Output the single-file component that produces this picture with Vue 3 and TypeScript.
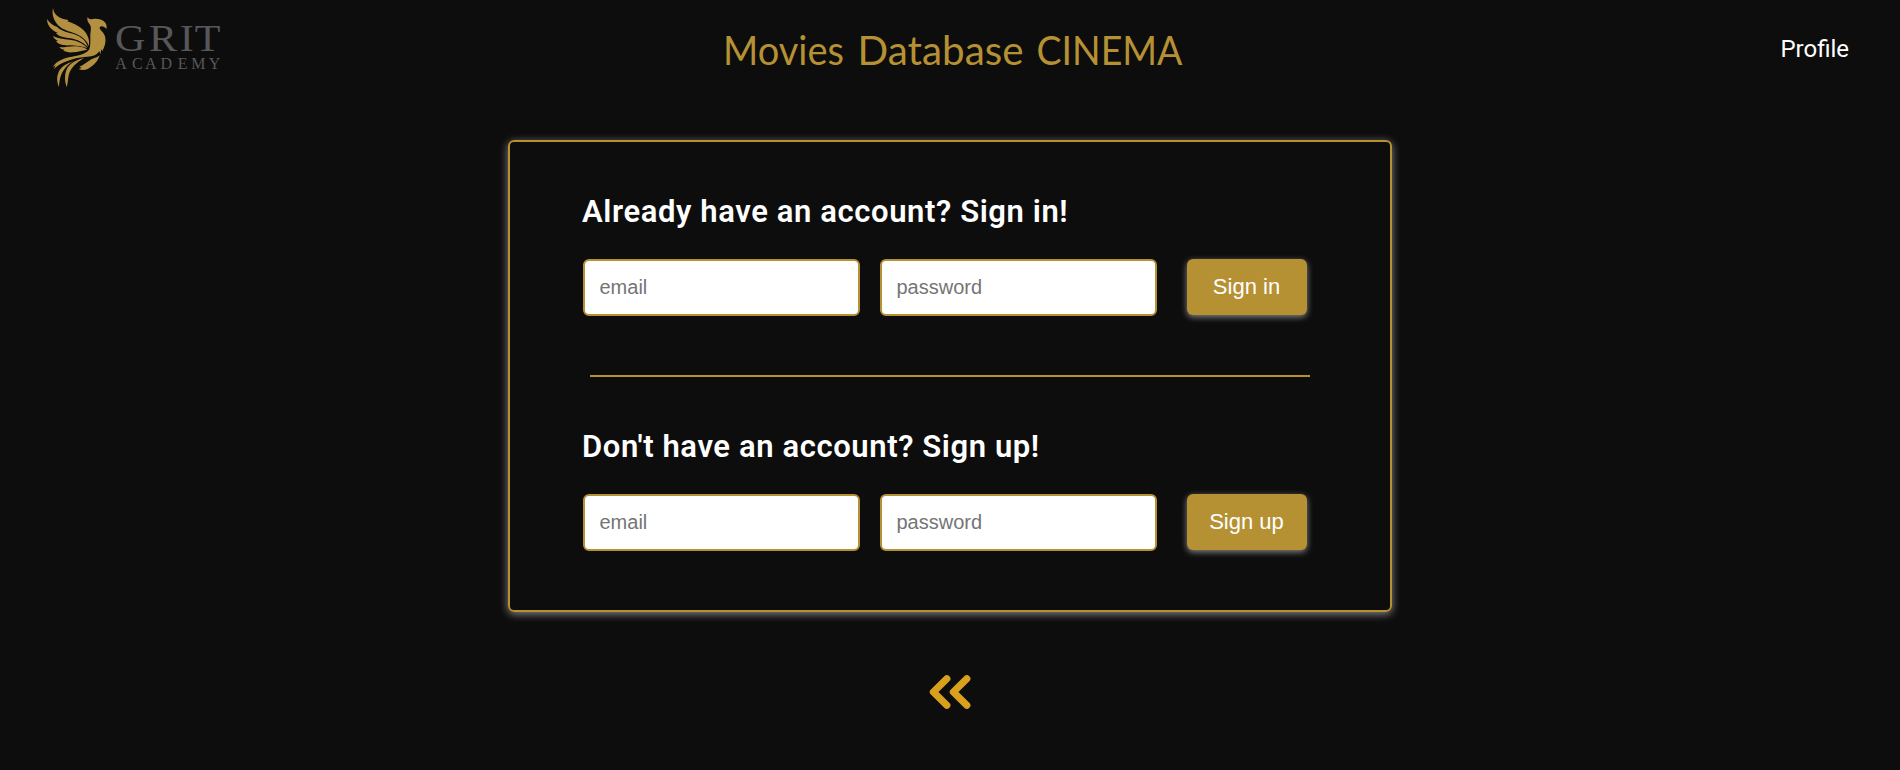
<script setup lang="ts">
interface AuthForm {
  id: string
  title: string
  action: string
}

const forms: AuthForm[] = [
  { id: 'signin', title: 'Already have an account? Sign in!', action: 'Sign in' },
  { id: 'signup', title: "Don't have an account? Sign up!", action: 'Sign up' },
]
</script>

<template>
  <div class="page">
    <header class="header">
      <svg class="logo" viewBox="0 0 200 96" width="200" height="96" role="img" aria-label="Grit Academy">
        <g class="bird" transform="scale(0.33333)">
          <path d="M69 23 C71 42 82 51 103 58 L115 60 L112 64 C128 69 148 78 161 91 C174 105 179 120 177 138 C170 122 160 112 145 105 C125 95 99 91 87 78 C74 65 64 47 69 23 Z" />
          <path d="M51 57 C59 70 69 76 82 81 C92 93 115 97 133 103 C153 110 168 122 174 142 C158 126 142 119 122 115 C104 112 87 111 78 99 L84 99 C66 91 51 78 51 57 Z" />
          <path d="M69 107 C82 116 100 116 119 119 C143 122 162 131 172 145 C154 138 139 137 119 136 C99 137 84 133 78 123 L85 123 C76 119 71 114 69 107 Z" />
          <path d="M88 142 C105 143 122 137 140 139 C153 140 164 143 172 149 C156 151 143 156 130 157 C116 158 106 156 100 151 L104 149 C97 149 92 146 88 142 Z" />
          <path d="M173 51 C176 57 181 59 188 57 C202 54 219 59 226 68 C230 74 231 80 229 87 C223 79 215 77 209 81 C207 89 221 95 225 109 C230 128 222 143 217 154 L214 147 L211 163 L208 153 C199 168 183 169 164 171 C130 174 91 187 71 208 L77 196 L68 201 C79 183 101 174 126 170 C153 166 169 160 178 148 C182 137 181 120 181 107 C181 94 186 83 179 73 C173 66 170 59 173 51 Z" />
          <path d="M163 174 C145 177 123 188 113 202 C105 215 104 231 106 247 L110 262 C116 243 112 228 122 211 C130 197 147 182 163 174 Z" />
          <path d="M130 184 C108 191 91 202 85 218 C79 232 81 248 87 262 C88 242 91 223 103 208 C110 198 119 190 130 184 Z" />
          <path d="M209 166 C205 183 190 198 173 207 C163 211 153 210 146 207 L155 204 L148 200 C161 196 172 185 184 178 C194 174 203 172 209 166 Z" />
        </g>
        <g class="wordmark">
          <text class="grit" transform="scale(1.12 1)" x="75.8 106.3 133.7 147.2" y="51">GRIT</text>
          <text class="academy" x="85.3 102 115 130.5 147.8 161.3 178.8" y="69">ACADEMY</text>
        </g>
      </svg>
      <h1 class="brand">
        <svg viewBox="0 0 470 96" width="470" height="96">
          <text y="65">
            <tspan x="0" textLength="121" lengthAdjust="spacingAndGlyphs">Movies</tspan>
            <tspan x="134.5" textLength="166" lengthAdjust="spacingAndGlyphs">Database</tspan>
            <tspan x="313.5" textLength="146" lengthAdjust="spacingAndGlyphs">CINEMA</tspan>
          </text>
        </svg>
      </h1>
      <nav class="nav"><a class="profile">Profile</a></nav>
    </header>

    <main class="main">
      <section class="card">
        <template v-for="(form, index) in forms" :key="form.id">
          <hr v-if="index > 0" class="divider" />
          <form class="auth" @submit.prevent>
            <h2 class="title">{{ form.title }}</h2>
            <div class="row">
              <input class="field" type="email" placeholder="email" />
              <input class="field" type="password" placeholder="password" />
              <button class="submit" type="submit">{{ form.action }}</button>
            </div>
          </form>
        </template>
      </section>

      <a class="back" aria-label="Back">
        <svg viewBox="0 0 42 36" width="42" height="36">
          <path d="M17.8 4.8 L4.4 18 L17.8 31.2 M37.8 4.8 L24.4 18 L37.8 31.2" />
        </svg>
      </a>
    </main>
  </div>
</template>

<style>
body {
  margin: 0;
  background: #0d0d0d;
}
</style>

<style scoped>
.page {
  box-sizing: border-box;
  height: 770px;
  overflow: hidden;
  background: #0d0d0d;
  color: #fff;
  font-family: Roboto, sans-serif;
}

.header {
  display: flex;
  height: 96px;
  padding: 0 51px 0 30px;
}

.logo {
  display: block;
}

.bird {
  fill: #b39040;
}

.wordmark {
  fill: #57575a;
  font-family: "Liberation Serif", serif;
}

.grit {
  font-size: 37.5px;
}

.academy {
  font-size: 16px;
}

.brand {
  margin: 0 0 0 493px;
  font: 400 41px Lato, sans-serif;
}

.brand svg {
  display: block;
  overflow: visible;
  fill: #b59134;
}

.nav {
  margin-left: auto;
  line-height: 98px;
}

.profile {
  font-size: 24px;
}

.main {
  display: flex;
  flex-direction: column;
  align-items: center;
  padding-top: 44px;
}

.card {
  box-sizing: border-box;
  width: 884px;
  height: 472px;
  padding: 50px 72px 0;
  border: 2px solid #b59134;
  border-radius: 6px;
  box-shadow: 0 2px 8px rgba(255, 255, 255, 0.5);
}

.title {
  margin: 0 0 27px;
  font-size: 31px;
  font-weight: 600;
  line-height: 40px;
  letter-spacing: 0.6px;
  white-space: nowrap;
}

.row {
  display: flex;
  padding-left: 1px;
}

.field {
  box-sizing: border-box;
  width: 277px;
  height: 57px;
  margin-right: 20px;
  padding: 0 14.5px;
  border: 2px solid #b59134;
  border-radius: 6px;
  outline: none;
  background: #fff;
  font: 20px "Liberation Sans", Arial, sans-serif;
}

.field::placeholder {
  color: #757575;
}

.submit {
  width: 120px;
  height: 56px;
  margin-left: 10px;
  padding: 0 1px 0 0;
  border: 0;
  border-radius: 6px;
  background: #b59134;
  box-shadow: 0 2px 6px rgba(255, 255, 255, 0.5);
  color: #fff;
  font: 22px "Liberation Sans", Arial, sans-serif;
}

.divider {
  width: 720px;
  height: 2px;
  margin: 59px 0 50px 8px;
  border: 0;
  background: #b59134;
}

.back {
  display: block;
  height: 36px;
  margin-top: 62px;
}

.back svg {
  display: block;
  fill: none;
  stroke: #d9a01d;
  stroke-width: 7.2;
  stroke-linecap: round;
  stroke-linejoin: round;
}
</style>
